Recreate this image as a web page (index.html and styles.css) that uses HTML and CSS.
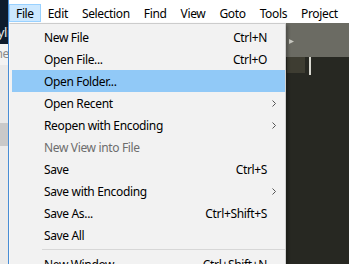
FILE: index.html
```html
<!DOCTYPE html>
<html>
<head>
<meta charset="utf-8">
<link rel="stylesheet" href="styles.css">
</head>
<body>
<div class="app">
  <div class="side">
    <div class="side-dark"><span class="side-text">yli</span></div>
    <div class="side-light"><span class="side-sub">ne</span></div>
    <div class="side-a"></div>
    <div class="side-b"></div>
    <div class="side-c"></div>
  </div>
  <div class="winborder"></div>
  <div class="main">
    <div class="menubar">
      <span class="mb-item active">File</span>
      <span class="mb-item">Edit</span>
      <span class="mb-item">Selection</span>
      <span class="mb-item">Find</span>
      <span class="mb-item">View</span>
      <span class="mb-item">Goto</span>
      <span class="mb-item">Tools</span>
      <span class="mb-item">Project</span>
    </div>
    <div class="below">
      <div class="menu">
        <div class="mi"><span class="lbl">New File</span><span class="sc">Ctrl+N</span><span class="ar"></span></div>
        <div class="mi"><span class="lbl">Open File...</span><span class="sc">Ctrl+O</span><span class="ar"></span></div>
        <div class="mi hl"><span class="lbl">Open Folder...</span><span class="sc"></span><span class="ar"></span></div>
        <div class="mi"><span class="lbl">Open Recent</span><span class="sc"></span><span class="ar"><svg width="4" height="7" viewBox="0 0 4 7"><path d="M0.5 0.5 L3.5 3.5 L0.5 6.5" fill="none" stroke="#555" stroke-width="1"/></svg></span></div>
        <div class="mi"><span class="lbl">Reopen with Encoding</span><span class="sc"></span><span class="ar"><svg width="4" height="7" viewBox="0 0 4 7"><path d="M0.5 0.5 L3.5 3.5 L0.5 6.5" fill="none" stroke="#555" stroke-width="1"/></svg></span></div>
        <div class="mi dis"><span class="lbl">New View into File</span><span class="sc"></span><span class="ar"></span></div>
        <div class="mi"><span class="lbl">Save</span><span class="sc">Ctrl+S</span><span class="ar"></span></div>
        <div class="mi"><span class="lbl">Save with Encoding</span><span class="sc"></span><span class="ar"><svg width="4" height="7" viewBox="0 0 4 7"><path d="M0.5 0.5 L3.5 3.5 L0.5 6.5" fill="none" stroke="#555" stroke-width="1"/></svg></span></div>
        <div class="mi"><span class="lbl">Save As...</span><span class="sc">Ctrl+Shift+S</span><span class="ar"></span></div>
        <div class="mi"><span class="lbl">Save All</span><span class="sc"></span><span class="ar"></span></div>
        <div class="sep"></div>
        <div class="mi"><span class="lbl">New Window</span><span class="sc">Ctrl+Shift+N</span><span class="ar"></span></div>
      </div>
      <div class="editor">
        <div class="tabbar"><svg class="tabarrow" width="5" height="5" viewBox="0 0 5 5"><path d="M0 0 L5 2.5 L0 5 Z" fill="#c8c8c0"/></svg></div>
        <div class="code">
          <div class="gutter-tab"></div>
          <div class="caret"></div>
        </div>
      </div>
    </div>
  </div>
</div>
</body>
</html>
```
FILE: styles.css
```css
html, body {
  margin: 0;
  padding: 0;
}
body {
  width: 349px;
  height: 264px;
  overflow: hidden;
  font-family: "Noto Sans", "Open Sans", sans-serif;
  font-size: 12px;
  letter-spacing: -0.35px;
  color: #000;
}
.app {
  display: flex;
  height: 264px;
}
.side {
  width: 8px;
  display: flex;
  flex-direction: column;
  overflow: hidden;
}
.side-dark {
  height: 44px;
  background: #0e1b2c;
  display: flex;
  align-items: flex-end;
  justify-content: flex-end;
  overflow: hidden;
}
.side-text {
  color: #e6e6e6;
  font-size: 13px;
  line-height: 16px;
  margin-bottom: 4px;
  margin-right: -2px;
  white-space: nowrap;
}
.side-light {
  height: 21px;
  background: #f3f3f3;
  display: flex;
  justify-content: flex-end;
  overflow: hidden;
}
.side-sub {
  color: #8a8a8a;
  font-size: 12px;
  line-height: 20px;
  margin-right: -1px;
  white-space: nowrap;
}
.side-a {
  height: 58px;
  background: #e9e9e9;
}
.side-b {
  height: 23px;
  background: #c9c9c9;
}
.side-c {
  flex: 1;
  background: #ebebeb;
}
.winborder {
  width: 1px;
  background: #4a90d9;
}
.main {
  flex: 1;
  display: flex;
  flex-direction: column;
  min-width: 0;
}
.menubar {
  height: 23px;
  background: #fff;
  display: flex;
  align-items: flex-start;
  white-space: nowrap;
  overflow: hidden;
}
.mb-item {
  margin-top: 4px;
  height: 18px;
  line-height: 17px;
  padding: 0 6px;
  border: 1px solid transparent;
  box-sizing: border-box;
}
.mb-item.active {
  background: #cce8ff;
  border-color: #99d1ff;
}
.below {
  flex: 1;
  display: flex;
  min-height: 0;
}
.menu {
  width: 277px;
  box-sizing: border-box;
  background: #f2f2f2;
  border-top: 1px solid #cccccc;
  border-left: 1px solid #f8f8f8;
  border-right: 1px solid #cfcfcf;
  padding: 2px 0 0 2px;
  box-shadow: 2px 2px 3px rgba(0,0,0,0.3);
  position: relative;
  z-index: 1;
}
.mi {
  height: 22px;
  display: flex;
  align-items: center;
  white-space: nowrap;
}
.mi.hl {
  background: #91c9f7;
}
.mi.dis {
  color: #6d6d6d;
}
.lbl {
  flex: 1;
  padding-left: 32px;
}
.sc {
  text-align: right;
}
.ar {
  width: 18px;
  display: flex;
  justify-content: flex-end;
  padding-right: 9px;
  box-sizing: border-box;
}
.ar svg {
  display: block;
}
.sep {
  height: 7px;
  display: flex;
  align-items: center;
  padding-left: 30px;
}
.sep::after {
  content: "";
  flex: 1;
  height: 1px;
  background: #d7d7d7;
}
.editor {
  flex: 1;
  display: flex;
  flex-direction: column;
  background: #272822;
}
.tabbar {
  height: 34px;
  background: #6b6b63;
  position: relative;
}
.tabarrow {
  position: absolute;
  left: 3px;
  top: 16px;
}
.code {
  flex: 1;
  display: flex;
  align-items: flex-start;
}
.gutter-tab {
  margin-left: 1px;
  width: 18px;
  height: 16px;
  background: #3e3d32;
}
.caret {
  margin-left: 4px;
  width: 2px;
  height: 18px;
  background: #d8d8d0;
}
```
